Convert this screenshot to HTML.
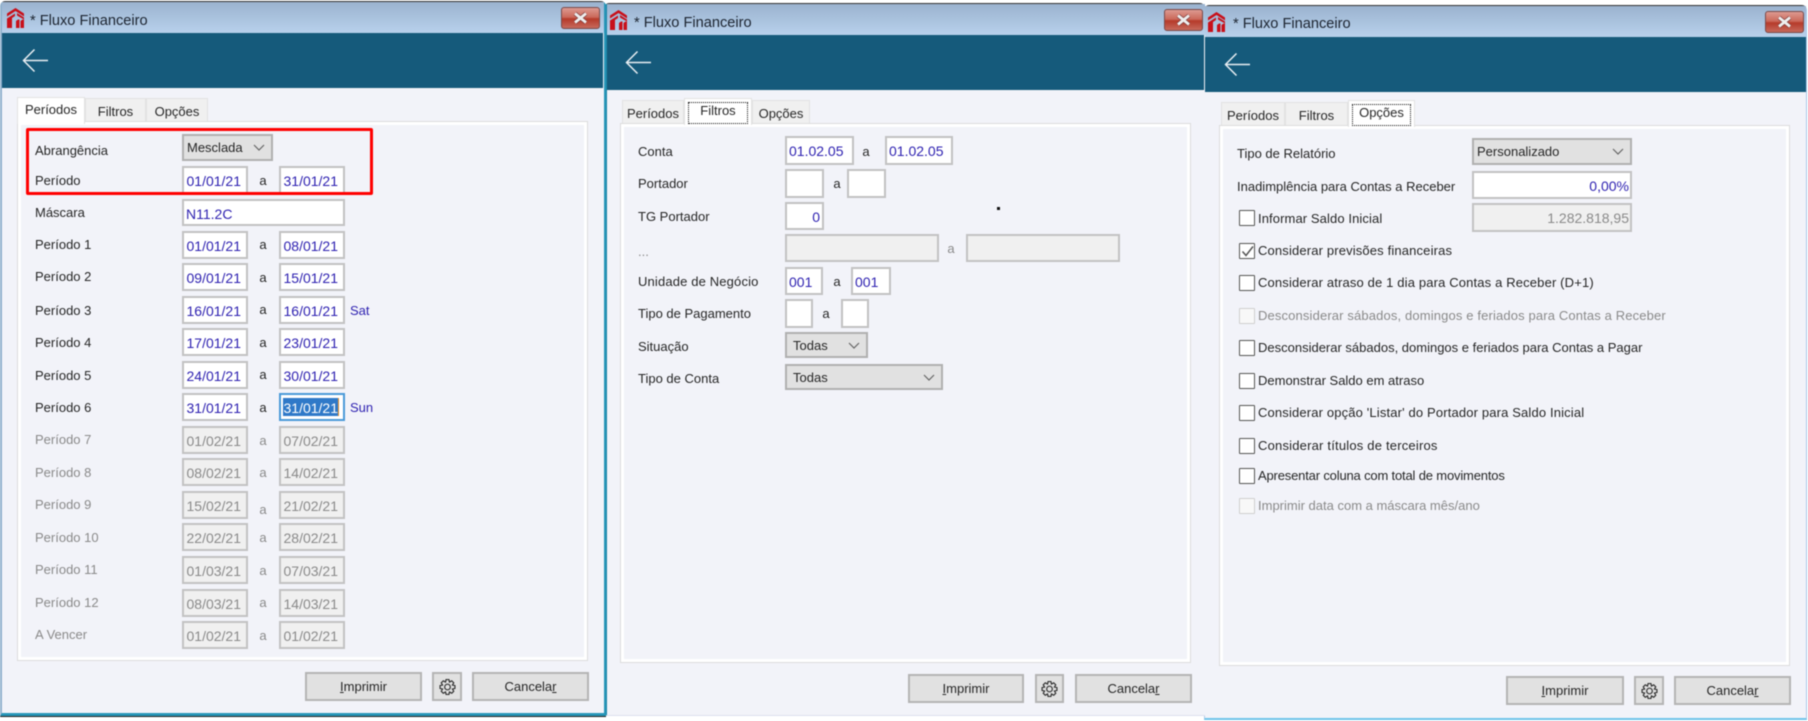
<!DOCTYPE html>
<html><head><meta charset="utf-8"><style>
html,body{margin:0;padding:0;width:1808px;height:721px;background:#fff;overflow:hidden}
#r{position:absolute;left:0;top:0;width:1808px;height:721px;overflow:hidden;filter:blur(.45px);font:13px "Liberation Sans",sans-serif;color:#262626}
#r div,#r svg{position:absolute;box-sizing:border-box}
.win{background:#f2f3f9}
.tb{background:linear-gradient(#9bb3cf,#b8d1ec)}
.teal{background:#155a7b}
.t{font-size:14.6px;line-height:20px;color:#1c2430;white-space:nowrap}
.x{background:linear-gradient(#dc9a92 0,#cc6a5c 45%,#b63a2a 55%,#c86a5c 100%);border:1px solid #7a4a4a;border-radius:3px}
.p{background:#f2f3f9;border:1px solid #dcdcdc;box-shadow:inset 0 0 0 3px #fff}
.tab{background:#f0f0f0;border:1px solid #e2e2e2;border-bottom:0;text-align:center;line-height:25px;white-space:nowrap}
.on{background:#fff;line-height:23px;z-index:2}
.dot{border:1px dotted #111;left:3px;top:3px;right:3px;bottom:1px}
.l{height:20px;line-height:20px;white-space:nowrap}
.g{color:#8a8a8a}
.f{background:#fff;border:2px solid #c2c2c2;color:#2c1fb0;font-size:14px;text-align:right;padding-right:5px;white-space:nowrap;line-height:26px;height:28px}
.d{background:#f0f0f0;color:#8a8a8a}
.a{width:20px;text-align:center;height:20px;line-height:20px}
.c{background:#e1e1e1;border:2px solid #b0b0b0;line-height:24px;padding-left:3px;font-size:13px;white-space:nowrap}
.c svg{right:6px;top:8px}
.b{background:#e1e1e1;border:2px solid #b4b4b4;text-align:center;line-height:26px;font-size:13px}
.k{width:16px;height:16px;background:#fff;border:1px solid #555;border-radius:1px}
.k0{border-color:#cfcfcf;background:#f8f8f8}
u{text-decoration:underline}
</style></head><body><div id="r">

<!-- window 3 behind -->
<div class="win" style="left:1204px;top:5px;width:603px;height:715px;border:1px solid #a9c9ea;border-top:1px solid #333;border-bottom:2px solid #6fc4ea;border-radius:5px 5px 0 0"></div>
<!-- window 2 -->
<div class="win" style="left:604px;top:3px;width:601px;height:713px;border-top:1px solid #333;border-bottom:1px solid #dce0ee;border-left:3px solid #1f86a8;border-radius:5px 5px 0 0"></div>
<!-- window 1 -->
<div class="win" style="left:0;top:1px;width:606px;height:715px;border:2px solid #8fb0cc;border-top:1px solid #333;border-right:2px solid #2796b8;border-bottom:3px solid #2796b8;border-radius:5px 5px 0 0;box-shadow:0 1px 0 #222"></div>

<!-- W1 header -->
<div class="tb" style="left:2px;top:2px;width:602px;height:31px"></div>
<div class="teal" style="left:2px;top:33px;width:601px;height:55px"></div>
<svg style="left:7px;top:8px" width="17" height="20" viewBox="0 0 17 20"><path d="M8.500 0L17 5.500V8.500L8.500 3 0 8.500V5.500ZM0 10.500L8 5.500V8L5 10V20H0ZM10 5L17 9.500V11.500L10 7.500ZM9 20V13L11 11.500H12.500V20ZM13.500 20V13L15.500 11.500H17V20Z" fill="#c8101a"/></svg>
<div class="t" style="left:30px;top:11px">* Fluxo Financeiro</div>
<div class="x" style="left:561px;top:7px;width:39px;height:22px"><svg style="left:11px;top:4px" width="15" height="12"><path d="M2 1.500L13 10.500M13 1.500L2 10.500" stroke="#7a3a3a" stroke-width="4.200" fill="none"/><path d="M2 1.500L13 10.500M13 1.500L2 10.500" stroke="#eee" stroke-width="2.800" fill="none"/></svg></div>
<svg style="left:21px;top:48px" width="28" height="25"><path d="M27 12.500H3M13.500 1.500L2.500 12.500 13.500 23.500" stroke="#e8eef2" stroke-width="1.500" fill="none"/></svg>

<!-- W1 tabs -->
<div class="tab" style="left:85px;top:98px;width:61px;height:24px">Filtros</div>
<div class="tab" style="left:146px;top:98px;width:62px;height:24px">Opções</div>
<div class="p" style="left:17px;top:121px;width:571px;height:540px"></div>
<div class="tab on" style="left:17px;top:97px;width:68px;height:27px">Períodos</div>

<div class="l" style="left:35px;top:141px">Abrangência</div>
<div class="c" style="left:182px;top:134px;width:91px;height:27px">Mesclada<svg width="12" height="8"><path d="M1 1L6 6 11 1" stroke="#666" stroke-width="1.200" fill="none"/></svg></div>
<div class="l" style="left:35px;top:171px">Período</div><div class="f" style="left:182px;top:166px;width:66px">01/01/21</div><div class="a" style="left:253px;top:171px">a</div><div class="f" style="left:279px;top:166px;width:66px">31/01/21</div>
<div class="l" style="left:35px;top:203px">Máscara</div><div class="f" style="left:182px;top:199px;width:163px;text-align:left;padding-left:2px;height:27px">N11.2C</div>

<div class="l" style="left:35px;top:235px">Período 1</div><div class="f" style="left:182px;top:231px;width:66px">01/01/21</div><div class="a" style="left:253px;top:235px">a</div><div class="f" style="left:279px;top:231px;width:66px">08/01/21</div>
<div class="l" style="left:35px;top:267px">Período 2</div><div class="f" style="left:182px;top:263px;width:66px">09/01/21</div><div class="a" style="left:253px;top:268px">a</div><div class="f" style="left:279px;top:263px;width:66px">15/01/21</div>
<div class="l" style="left:35px;top:301px">Período 3</div><div class="f" style="left:182px;top:296px;width:66px">16/01/21</div><div class="a" style="left:253px;top:300px">a</div><div class="f" style="left:279px;top:296px;width:66px">16/01/21</div><div class="l" style="left:350px;top:301px;color:#2c1fb0">Sat</div>
<div class="l" style="left:35px;top:333px">Período 4</div><div class="f" style="left:182px;top:328px;width:66px">17/01/21</div><div class="a" style="left:253px;top:333px">a</div><div class="f" style="left:279px;top:328px;width:66px">23/01/21</div>
<div class="l" style="left:35px;top:366px">Período 5</div><div class="f" style="left:182px;top:361px;width:66px">24/01/21</div><div class="a" style="left:253px;top:365px">a</div><div class="f" style="left:279px;top:361px;width:66px">30/01/21</div>
<div class="l" style="left:35px;top:398px">Período 6</div><div class="f" style="left:182px;top:393px;width:66px">31/01/21</div><div class="a" style="left:253px;top:398px">a</div><div class="f" style="left:279px;top:393px;width:66px;border-color:#4a9ad8;color:#fff"><div style="left:2px;top:3px;width:56px;height:18px;background:#2f79c8;border-right:1px solid #e8902a"></div><div style="right:5px;top:0;color:#fff">31/01/21</div></div><div class="l" style="left:350px;top:398px;color:#2c1fb0">Sun</div>

<div class="l g" style="left:35px;top:430px">Período 7</div><div class="f d" style="left:182px;top:426px;width:66px">01/02/21</div><div class="a g" style="left:253px;top:431px">a</div><div class="f d" style="left:279px;top:426px;width:66px">07/02/21</div>
<div class="l g" style="left:35px;top:463px">Período 8</div><div class="f d" style="left:182px;top:458px;width:66px">08/02/21</div><div class="a g" style="left:253px;top:463px">a</div><div class="f d" style="left:279px;top:458px;width:66px">14/02/21</div>
<div class="l g" style="left:35px;top:495px">Período 9</div><div class="f d" style="left:182px;top:491px;width:66px">15/02/21</div><div class="a g" style="left:253px;top:500px">a</div><div class="f d" style="left:279px;top:491px;width:66px">21/02/21</div>
<div class="l g" style="left:35px;top:528px">Período 10</div><div class="f d" style="left:182px;top:523px;width:66px">22/02/21</div><div class="a g" style="left:253px;top:528px">a</div><div class="f d" style="left:279px;top:523px;width:66px">28/02/21</div>
<div class="l g" style="left:35px;top:560px">Período 11</div><div class="f d" style="left:182px;top:556px;width:66px">01/03/21</div><div class="a g" style="left:253px;top:561px">a</div><div class="f d" style="left:279px;top:556px;width:66px">07/03/21</div>
<div class="l g" style="left:35px;top:593px">Período 12</div><div class="f d" style="left:182px;top:589px;width:66px">08/03/21</div><div class="a g" style="left:253px;top:593px">a</div><div class="f d" style="left:279px;top:589px;width:66px">14/03/21</div>
<div class="l g" style="left:35px;top:625px">A Vencer</div><div class="f d" style="left:182px;top:621px;width:66px">01/02/21</div><div class="a g" style="left:253px;top:626px">a</div><div class="f d" style="left:279px;top:621px;width:66px">01/02/21</div>

<div style="left:26px;top:128px;width:347px;height:67px;border:3.500px solid #f00;border-radius:2px;z-index:3"></div>

<div class="b" style="left:305px;top:672px;width:117px;height:29px"><u>I</u>mprimir</div>
<div class="b" style="left:432px;top:672px;width:30px;height:29px"><svg style="left:5px;top:4px" width="17" height="18" viewBox="0 0 24 24"><path d="M10 1.500H14L14.800 5 18 3.300 20.800 6.100 19 9.300 22.500 10V14L19 14.800 20.800 18 18 20.800 14.800 19 14 22.500H10L9.200 19 6 20.800 3.200 18 5 14.800 1.500 14V10L5 9.300 3.200 6.100 6 3.300 9.200 5Z" fill="none" stroke="#333" stroke-width="1.700"/><circle cx="12" cy="12" r="4" fill="none" stroke="#333" stroke-width="1.700"/></svg></div>
<div class="b" style="left:472px;top:672px;width:117px;height:29px">Cancela<u>r</u></div>

<!-- W2 header -->
<div class="tb" style="left:607px;top:4px;width:598px;height:31px"></div>
<div class="teal" style="left:607px;top:35px;width:597px;height:55px"></div>
<svg style="left:610px;top:10px" width="17" height="20" viewBox="0 0 17 20"><path d="M8.500 0L17 5.500V8.500L8.500 3 0 8.500V5.500ZM0 10.500L8 5.500V8L5 10V20H0ZM10 5L17 9.500V11.500L10 7.500ZM9 20V13L11 11.500H12.500V20ZM13.500 20V13L15.500 11.500H17V20Z" fill="#c8101a"/></svg>
<div class="t" style="left:634px;top:13px">* Fluxo Financeiro</div>
<div class="x" style="left:1164px;top:9px;width:39px;height:22px"><svg style="left:11px;top:4px" width="15" height="12"><path d="M2 1.500L13 10.500M13 1.500L2 10.500" stroke="#7a3a3a" stroke-width="4.200" fill="none"/><path d="M2 1.500L13 10.500M13 1.500L2 10.500" stroke="#eee" stroke-width="2.800" fill="none"/></svg></div>
<svg style="left:624px;top:50px" width="28" height="25"><path d="M27 12.500H3M13.500 1.500L2.500 12.500 13.500 23.500" stroke="#e8eef2" stroke-width="1.500" fill="none"/></svg>

<div class="tab" style="left:622px;top:100px;width:62px;height:24px">Períodos</div>
<div class="tab" style="left:752px;top:100px;width:58px;height:24px">Opções</div>
<div class="p" style="left:620px;top:123px;width:571px;height:540px"></div>
<div class="tab on" style="left:684px;top:98px;width:68px;height:27px">Filtros<div class="dot"></div></div>

<div class="l" style="left:638px;top:142px">Conta</div><div class="f" style="left:785px;top:136px;width:69px;height:29px;text-align:left;padding:0 0 0 2px;line-height:27px">01.02.05</div><div class="a" style="left:856px;top:142px">a</div><div class="f" style="left:885px;top:136px;width:68px;height:29px;text-align:left;padding:0 0 0 2px;line-height:27px">01.02.05</div>
<div class="l" style="left:638px;top:174px">Portador</div><div class="f" style="left:785px;top:169px;width:39px;height:29px"></div><div class="a" style="left:827px;top:174px">a</div><div class="f" style="left:847px;top:169px;width:39px;height:29px"></div>
<div class="l" style="left:638px;top:207px">TG Portador</div><div class="f" style="left:785px;top:202px;width:39px;height:28px;padding-right:2px">0</div>
<div style="left:997px;top:207px;width:3px;height:3px;background:#111"></div>
<div class="l g" style="left:638px;top:242px">...</div><div class="f d" style="left:785px;top:234px;width:154px"></div><div class="a g" style="left:941px;top:239px">a</div><div class="f d" style="left:966px;top:234px;width:154px"></div>
<div class="l" style="left:638px;top:272px;letter-spacing:.15px">Unidade de Negócio</div><div class="f" style="left:785px;top:267px;width:38px;text-align:left;padding:0 0 0 2px">001</div><div class="a" style="left:827px;top:272px">a</div><div class="f" style="left:851px;top:267px;width:40px;text-align:left;padding:0 0 0 2px">001</div>
<div class="l" style="left:638px;top:304px">Tipo de Pagamento</div><div class="f" style="left:785px;top:299px;width:28px;height:29px"></div><div class="a" style="left:816px;top:304px">a</div><div class="f" style="left:841px;top:299px;width:28px;height:29px"></div>
<div class="l" style="left:638px;top:337px">Situação</div><div class="c" style="left:785px;top:332px;width:83px;height:26px;padding-left:6px">Todas<svg width="12" height="8"><path d="M1 1L6 6 11 1" stroke="#666" stroke-width="1.200" fill="none"/></svg></div>
<div class="l" style="left:638px;top:369px">Tipo de Conta</div><div class="c" style="left:785px;top:364px;width:158px;height:26px;padding-left:6px">Todas<svg width="12" height="8"><path d="M1 1L6 6 11 1" stroke="#666" stroke-width="1.200" fill="none"/></svg></div>

<div class="b" style="left:908px;top:674px;width:116px;height:29px"><u>I</u>mprimir</div>
<div class="b" style="left:1035px;top:674px;width:29px;height:29px"><svg style="left:4px;top:4px" width="17" height="18" viewBox="0 0 24 24"><path d="M10 1.500H14L14.800 5 18 3.300 20.800 6.100 19 9.300 22.500 10V14L19 14.800 20.800 18 18 20.800 14.800 19 14 22.500H10L9.200 19 6 20.800 3.200 18 5 14.800 1.500 14V10L5 9.300 3.200 6.100 6 3.300 9.200 5Z" fill="none" stroke="#333" stroke-width="1.700"/><circle cx="12" cy="12" r="4" fill="none" stroke="#333" stroke-width="1.700"/></svg></div>
<div class="b" style="left:1075px;top:674px;width:117px;height:29px">Cancela<u>r</u></div>

<!-- W3 header -->
<div class="tb" style="left:1205px;top:6px;width:601px;height:31px"></div>
<div class="teal" style="left:1205px;top:37px;width:601px;height:55px"></div>
<svg style="left:1208px;top:12px" width="17" height="20" viewBox="0 0 17 20"><path d="M8.500 0L17 5.500V8.500L8.500 3 0 8.500V5.500ZM0 10.500L8 5.500V8L5 10V20H0ZM10 5L17 9.500V11.500L10 7.500ZM9 20V13L11 11.500H12.500V20ZM13.500 20V13L15.500 11.500H17V20Z" fill="#c8101a"/></svg>
<div class="t" style="left:1233px;top:14px">* Fluxo Financeiro</div>
<div class="x" style="left:1765px;top:11px;width:39px;height:22px"><svg style="left:11px;top:4px" width="15" height="12"><path d="M2 1.500L13 10.500M13 1.500L2 10.500" stroke="#7a3a3a" stroke-width="4.200" fill="none"/><path d="M2 1.500L13 10.500M13 1.500L2 10.500" stroke="#eee" stroke-width="2.800" fill="none"/></svg></div>
<svg style="left:1223px;top:52px" width="28" height="25"><path d="M27 12.500H3M13.500 1.500L2.500 12.500 13.500 23.500" stroke="#e8eef2" stroke-width="1.500" fill="none"/></svg>

<div class="tab" style="left:1221px;top:102px;width:64px;height:24px">Períodos</div>
<div class="tab" style="left:1285px;top:102px;width:63px;height:24px">Filtros</div>
<div class="p" style="left:1219px;top:125px;width:571px;height:541px"></div>
<div class="tab on" style="left:1348px;top:100px;width:67px;height:27px">Opções<div class="dot"></div></div>

<div class="l" style="left:1237px;top:144px">Tipo de Relatório</div><div class="c" style="left:1472px;top:138px;width:160px;height:27px">Personalizado<svg width="12" height="8"><path d="M1 1L6 6 11 1" stroke="#666" stroke-width="1.200" fill="none"/></svg></div>
<div class="l" style="left:1237px;top:177px">Inadimplência para Contas a Receber</div><div class="f" style="left:1472px;top:171px;width:160px;padding-right:1px">0,00%</div>
<div class="k" style="left:1239px;top:210px"></div><div class="l" style="left:1258px;top:209px;letter-spacing:.1px">Informar Saldo Inicial</div><div class="f d" style="left:1472px;top:203px;width:160px;height:29px;padding-right:1px;line-height:27px">1.282.818,95</div>
<div class="k" style="left:1239px;top:243px"><svg style="left:1px;top:1px" width="13" height="13"><path d="M1.500 6.500L5 10.500 12 1.500" stroke="#555" stroke-width="1.500" fill="none"/></svg></div><div class="l" style="left:1258px;top:241px;letter-spacing:.15px">Considerar previsões financeiras</div>
<div class="k" style="left:1239px;top:275px"></div><div class="l" style="left:1258px;top:273px;letter-spacing:.15px">Considerar atraso de 1 dia para Contas a Receber (D+1)</div>
<div class="k k0" style="left:1239px;top:308px"></div><div class="l g" style="left:1258px;top:306px;letter-spacing:.14px">Desconsiderar sábados, domingos e feriados para Contas a Receber</div>
<div class="k" style="left:1239px;top:340px"></div><div class="l" style="left:1258px;top:338px">Desconsiderar sábados, domingos e feriados para Contas a Pagar</div>
<div class="k" style="left:1239px;top:373px"></div><div class="l" style="left:1258px;top:371px">Demonstrar Saldo em atraso</div>
<div class="k" style="left:1239px;top:405px"></div><div class="l" style="left:1258px;top:403px;letter-spacing:.15px">Considerar opção 'Listar' do Portador para Saldo Inicial</div>
<div class="k" style="left:1239px;top:438px"></div><div class="l" style="left:1258px;top:436px;letter-spacing:.2px">Considerar títulos de terceiros</div>
<div class="k" style="left:1239px;top:468px"></div><div class="l" style="left:1258px;top:466px;letter-spacing:-.17px">Apresentar coluna com total de movimentos</div>
<div class="k k0" style="left:1239px;top:498px"></div><div class="l g" style="left:1258px;top:496px">Imprimir data com a máscara mês/ano</div>

<div class="b" style="left:1506px;top:676px;width:118px;height:29px"><u>I</u>mprimir</div>
<div class="b" style="left:1634px;top:676px;width:30px;height:29px"><svg style="left:5px;top:4px" width="17" height="18" viewBox="0 0 24 24"><path d="M10 1.500H14L14.800 5 18 3.300 20.800 6.100 19 9.300 22.500 10V14L19 14.800 20.800 18 18 20.800 14.800 19 14 22.500H10L9.200 19 6 20.800 3.200 18 5 14.800 1.500 14V10L5 9.300 3.200 6.100 6 3.300 9.200 5Z" fill="none" stroke="#333" stroke-width="1.700"/><circle cx="12" cy="12" r="4" fill="none" stroke="#333" stroke-width="1.700"/></svg></div>
<div class="b" style="left:1674px;top:676px;width:117px;height:29px">Cancela<u>r</u></div>

</div></body></html>
